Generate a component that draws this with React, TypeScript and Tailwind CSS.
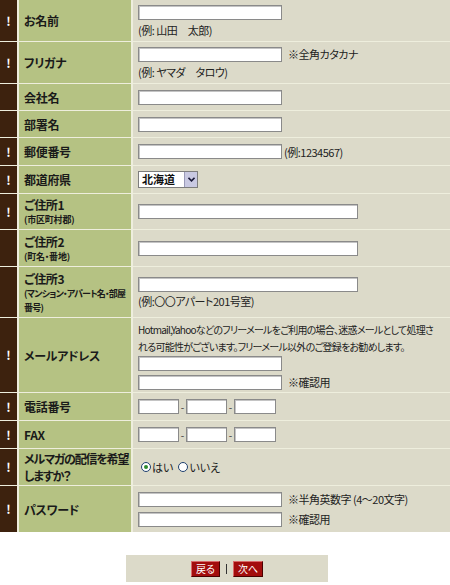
import type { ReactNode } from "react";

const FONT = "font-['Noto_Sans_CJK_JP','Noto_Sans',sans-serif] [font-feature-settings:'palt']";

function Field({ className = "" }: { className?: string }) {
  return (
    <div
      className={`h-[15px] shrink-0 border border-[#8a8a8a] bg-white shadow-[inset_1px_1px_0_#c4c4c4] ${className}`}
    />
  );
}

function Note({ children, className = "" }: { children: ReactNode; className?: string }) {
  return (
    <span className={`whitespace-nowrap text-[11px] leading-[14px] tracking-[-0.5px] text-[#222] ${className}`}>
      {children}
    </span>
  );
}

type RowProps = {
  required?: boolean;
  height: string;
  label: ReactNode;
  children: ReactNode;
};

function Row({ required = true, height, label, children }: RowProps) {
  return (
    <div className={`grid grid-cols-[17px_112px_1fr] gap-x-[2px] ${height}`}>
      <div className="flex items-center justify-center bg-[#3d220e]">
        {required && <span className="text-[12px] font-bold leading-none text-white">!</span>}
      </div>
      <div className="flex flex-col justify-center overflow-hidden whitespace-nowrap bg-[#b5c283] pl-[5px] font-bold text-[#1a1a1a]">
        {label}
      </div>
      <div className="flex flex-col items-start justify-center overflow-hidden bg-[#dcdac9] pl-[5px]">
        {children}
      </div>
    </div>
  );
}

function Label({ children, className = "tracking-[-0.3px]" }: { children: ReactNode; className?: string }) {
  return <span className={`text-[12px] leading-[17px] ${className}`}>{children}</span>;
}

function Sub({ children, className = "tracking-[-0.2px]" }: { children: ReactNode; className?: string }) {
  return <span className={`text-[9px] leading-[14px] ${className}`}>{children}</span>;
}

function Radio({ checked }: { checked?: boolean }) {
  return (
    <span className="flex h-[10px] w-[10px] items-center justify-center rounded-full border border-[#1d3f6e] bg-white">
      {checked && <span className="h-[4px] w-[4px] rounded-full bg-[#2e8b2e]" />}
    </span>
  );
}

function Tel() {
  return (
    <div className="flex items-center">
      <Field className="w-[41px]" />
      <span className="w-[7px] text-center text-[10px] leading-none text-[#333]">-</span>
      <Field className="w-[41px]" />
      <span className="w-[7px] text-center text-[10px] leading-none text-[#333]">-</span>
      <Field className="w-[42px]" />
    </div>
  );
}

function RedButton({ children }: { children: ReactNode }) {
  return (
    <button
      type="button"
      className="flex h-[16px] items-center justify-center border border-t-[#d96a6a] border-l-[#d96a6a] border-b-[#4a0000] border-r-[#4a0000] bg-[#a30d0d] px-[4px] text-[10px] leading-none text-white"
    >
      {children}
    </button>
  );
}

export default function App() {
  return (
    <div className={`w-[450px] bg-white ${FONT}`}>
      <div className="flex flex-col gap-y-px bg-[#eeeedd]">
        <Row height="h-[41px]" label={<Label>お名前</Label>}>
          <Field className="w-[144px]" />
          <Note className="mt-[3px]">(例: 山田　太郎)</Note>
        </Row>
        <Row height="h-[41px]" label={<Label>フリガナ</Label>}>
          <div className="flex items-center gap-[6px]">
            <Field className="w-[144px]" />
            <Note>※全角カタカナ</Note>
          </div>
          <Note className="mt-[3px]">(例: ヤマダ　タロウ)</Note>
        </Row>
        <Row required={false} height="h-[26px]" label={<Label>会社名</Label>}>
          <Field className="w-[144px]" />
        </Row>
        <Row required={false} height="h-[26px]" label={<Label>部署名</Label>}>
          <Field className="w-[144px]" />
        </Row>
        <Row height="h-[27px]" label={<Label>郵便番号</Label>}>
          <div className="flex items-center gap-[2px]">
            <Field className="w-[144px]" />
            <Note>(例:1234567)</Note>
          </div>
        </Row>
        <Row height="h-[27px]" label={<Label>都道府県</Label>}>
          <div className="flex h-[17px] w-[60px] items-center border border-[#7d7d7d] bg-white">
            <span className="flex-1 pl-[3px] text-[11px] font-bold leading-none text-[#111]">
              北海道
            </span>
            <span className="flex h-full w-[13px] items-center justify-center border-l border-[#9a9ab8] bg-[#c9c9e2]">
              <svg width="7" height="5" viewBox="0 0 7 5">
                <path d="M0.5 0.8 L3.5 3.8 L6.5 0.8" fill="none" stroke="#1b1b3a" strokeWidth="1.6" />
              </svg>
            </span>
          </div>
        </Row>
        <Row
          height="h-[35px]"
          label={
            <>
              <Label>ご住所1</Label>
              <Sub>(市区町村郡)</Sub>
            </>
          }
        >
          <Field className="w-[220px]" />
        </Row>
        <Row
          required={false}
          height="h-[36px]"
          label={
            <>
              <Label>ご住所2</Label>
              <Sub>(町名・番地)</Sub>
            </>
          }
        >
          <Field className="w-[220px]" />
        </Row>
        <Row
          required={false}
          height="h-[50px]"
          label={
            <>
              <Label>ご住所3</Label>
              <Sub className="tracking-[-0.8px]">
                (マンション・アパート名・部屋
                <br />
                番号)
              </Sub>
            </>
          }
        >
          <Field className="w-[220px]" />
          <Note className="mt-[2px]">(例:〇〇アパート201号室)</Note>
        </Row>
        <Row height="h-[74px]" label={<Label>メールアドレス</Label>}>
          <p className="whitespace-nowrap text-[10px] leading-[17px] tracking-[-0.75px] text-[#222]">
            Hotmail,Yahooなどのフリーメールをご利用の場合、迷惑メールとして処理さ
            <br />
            れる可能性がございます。フリーメール以外のご登録をお勧めします。
          </p>
          <Field className="mt-[1px] w-[144px]" />
          <div className="mt-[4px] flex items-center gap-[6px]">
            <Field className="w-[144px]" />
            <Note>※確認用</Note>
          </div>
        </Row>
        <Row height="h-[27px]" label={<Label>電話番号</Label>}>
          <Tel />
        </Row>
        <Row height="h-[27px]" label={<Label>FAX</Label>}>
          <Tel />
        </Row>
        <Row
          height="h-[36px]"
          label={
            <Label className="tracking-[-1.2px]">
              メルマガの配信を希望
              <br />
              しますか？
            </Label>
          }
        >
          <div className="flex items-center pl-[3px] text-[11px] leading-none text-[#222]">
            <Radio checked />
            <span className="ml-[1px]">はい</span>
            <span className="ml-[5px]">
              <Radio />
            </span>
            <span className="ml-[1px]">いいえ</span>
          </div>
        </Row>
        <Row height="h-[46px]" label={<Label>パスワード</Label>}>
          <div className="flex items-center gap-[6px]">
            <Field className="w-[144px]" />
            <Note>※半角英数字 (4～20文字)</Note>
          </div>
          <div className="mt-[5px] flex items-center gap-[6px]">
            <Field className="w-[144px]" />
            <Note>※確認用</Note>
          </div>
        </Row>
      </div>
      <div className="pb-[4px] pt-[23px]">
        <div className="mx-auto flex h-[27px] w-[202px] translate-x-[2px] items-center justify-center gap-[6px] bg-[#dcdac9]">
          <RedButton>戻る</RedButton>
          <span className="h-[10px] w-px bg-[#333]" />
          <RedButton>次へ</RedButton>
        </div>
      </div>
    </div>
  );
}
